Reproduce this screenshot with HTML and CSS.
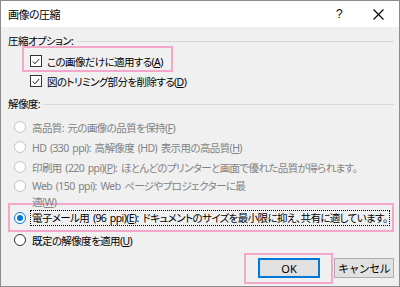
FILE: index.html
```html
<!DOCTYPE html>
<html lang="ja">
<head>
    <meta charset="UTF-8">
    <title>画像の圧縮</title>
    <link rel="stylesheet" href="styles.css">
</head>
<body>
    <div class="dialog">
        <div class="titlebar">
            <span class="title">画像の圧縮</span>
            <span class="help">?</span>
            <span class="close">
                <svg width="11" height="11" viewBox="0 0 11 11"><path d="M0.5 0.5L10.5 10.5M10.5 0.5L0.5 10.5" stroke="#000" stroke-width="1.1"/></svg>
            </span>
        </div>

        <div class="content">
            <div class="group-head">
                <span>圧縮オプション:</span>
                <span class="rule"></span>
            </div>

            <div class="mark mark-first">
                <div class="row check-row">
                    <span class="checkbox"><svg width="11" height="11" viewBox="0 0 11 11"><path d="M2 5.5L4.3 8L9 2.8" fill="none" stroke="#000" stroke-width="1"/></svg></span>
                    <span>この画像だけに適用する(<u>A</u>)</span>
                </div>
            </div>
            <div class="row check-row indent">
                <span class="checkbox"><svg width="11" height="11" viewBox="0 0 11 11"><path d="M2 5.5L4.3 8L9 2.8" fill="none" stroke="#000" stroke-width="1"/></svg></span>
                <span>図のトリミング部分を削除する(<u>D</u>)</span>
            </div>

            <div class="group-head second">
                <span>解像度:</span>
                <span class="rule"></span>
            </div>

            <div class="options">
                <div class="row radio-row disabled">
                    <span class="radio"></span>
                    <span>高品質: 元の画像の品質を保持(<u>F</u>)</span>
                </div>
                <div class="row radio-row disabled">
                    <span class="radio"></span>
                    <span>HD (330 ppi): 高解像度 (HD) 表示用の高品質(<u>H</u>)</span>
                </div>
                <div class="row radio-row disabled">
                    <span class="radio"></span>
                    <span>印刷用 (220 ppi)(<u>P</u>): ほとんどのプリンターと画面で優れた品質が得られます。</span>
                </div>
                <div class="row radio-row disabled wrap">
                    <span class="radio"></span>
                    <span class="narrow">Web (150 ppi): Web ページやプロジェクターに最<br>適(<u>W</u>)</span>
                </div>

                <div class="mark mark-wide">
                    <div class="row radio-row">
                        <span class="radio checked"></span>
                        <span class="focus">電子メール用 (96 ppi)(<u>E</u>): ドキュメントのサイズを最小限に抑え、共有に適しています。</span>
                    </div>
                </div>
                <div class="row radio-row default-row">
                    <span class="radio"></span>
                    <span>既定の解像度を適用(<u>U</u>)</span>
                </div>
            </div>

            <div class="buttons">
                <div class="mark mark-ok">
                    <button class="btn btn-default">OK</button>
                </div>
                <button class="btn">キャンセル</button>
            </div>
        </div>
    </div>
</body>
</html>
```

FILE: styles.css
```css
* {
    margin: 0;
    padding: 0;
    box-sizing: border-box;
}

body {
    font-family: "Noto Sans", "Noto Sans CJK JP", sans-serif;
    font-size: 10.5px;
    letter-spacing: -0.6px;
    word-spacing: 1.5px;
    font-feature-settings: "palt";
    color: #000;
    background: #fff;
}

.dialog {
    width: 400px;
    height: 287px;
    border: 1px solid #8c8c8c;
    background: #f0f0f0;
    overflow: hidden;
}

.titlebar {
    height: 26px;
    background: #fff;
    display: flex;
    align-items: center;
    padding-left: 7px;
}

.title {
    flex: 1;
    font-size: 11px;
    letter-spacing: -0.5px;
}

.help {
    width: 40px;
    text-align: center;
    font-family: "Liberation Sans", sans-serif;
    font-size: 12px;
}

.close {
    width: 38px;
    height: 26px;
    display: flex;
    align-items: center;
    justify-content: center;
    margin-right: 2px;
}

.content {
    padding: 6px 5px 0 7px;
}

.group-head {
    display: flex;
    align-items: center;
    height: 16px;
    line-height: 16px;
}

.group-head.second {
    margin-top: 6px;
}

.rule {
    flex: 1;
    height: 1px;
    background: #d8d8d8;
    margin-left: 4px;
}

.options {
    margin-top: 5px;
}

.row {
    display: flex;
    align-items: center;
    height: 20px;
    white-space: nowrap;
}

.check-row {
    gap: 5px;
}

.check-row.indent {
    padding-left: 22px;
    height: 18px;
}

.radio-row {
    gap: 6px;
    padding-left: 6px;
}

.disabled {
    color: #838383;
}

.wrap {
    height: auto;
    align-items: flex-start;
    margin-top: 1px;
}

.wrap .radio {
    margin-top: 2px;
}

.narrow {
    line-height: 16px;
}

.default-row {
    margin-top: -2px;
}

.checkbox {
    width: 12px;
    height: 12px;
    border: 1px solid #333;
    background: #fff;
    flex-shrink: 0;
    display: flex;
    align-items: center;
    justify-content: center;
}

.radio {
    width: 12px;
    height: 12px;
    border-radius: 50%;
    border: 1px solid #333;
    background: #fff;
    flex-shrink: 0;
    display: flex;
    align-items: center;
    justify-content: center;
}

.disabled .radio {
    border-color: #c4c4c4;
}

.radio.checked {
    border-color: #0078d7;
}

.radio.checked::after {
    content: "";
    width: 6px;
    height: 6px;
    border-radius: 50%;
    background: #0078d7;
}

.focus {
    border: 1px dotted #000;
    padding: 0 1px;
    line-height: 14px;
}

/* pink annotation boxes */
.mark {
    border: 2px solid #f4a7c9;
}

.mark-first {
    display: inline-block;
    margin: -3px 0 0 14px;
    padding: 4px 8px 0 6px;
}

.mark-first .row {
    height: 18px;
}

.mark-wide {
    margin-top: -7px;
    padding: 3px 0 2px 4px;
}

.mark-wide .row {
    height: 20px;
    padding-left: 0;
    gap: 4px;
}

.buttons {
    display: flex;
    justify-content: flex-end;
    align-items: flex-start;
    margin-top: 3px;
}

.mark-ok {
    padding: 3px 11px 4px 12px;
    margin-right: 1px;
}

.btn {
    font-family: inherit;
    font-size: 11px;
    letter-spacing: 0;
    word-spacing: 0;
    height: 20px;
    background: #e1e1e1;
    border: 1px solid #adadad;
    color: #000;
}

.btn-default {
    border: 2px solid #0078d7;
    width: 62px;
}

.buttons > .btn {
    margin-top: 5px;
    width: 60px;
    letter-spacing: -0.6px;
}
```
